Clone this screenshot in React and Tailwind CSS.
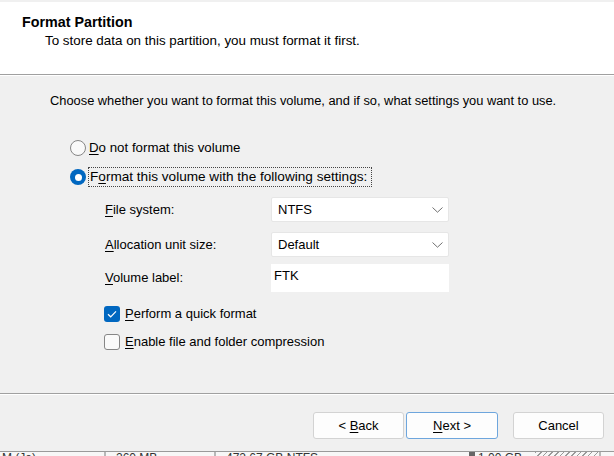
import React from 'react';

const font = { fontFamily: '"Liberation Sans", Arial, sans-serif' };

const Chevron = () => (
  <svg width="11" height="6" viewBox="0 0 11 6" className="text-[#707070]">
    <path d="M0.5 0.5 L5.5 5.2 L10.5 0.5" fill="none" stroke="currentColor" strokeWidth="1" />
  </svg>
);

const Radio = ({ checked }) =>
  checked ? (
    <span className="flex h-4 w-4 items-center justify-center rounded-full bg-[#0067c0]">
      <span className="h-[7px] w-[7px] rounded-full bg-white" />
    </span>
  ) : (
    <span className="h-4 w-4 rounded-full border border-[#868686] bg-[#f9f9f9]" />
  );

const Checkbox = ({ checked }) =>
  checked ? (
    <span className="flex h-4 w-4 items-center justify-center rounded-[3px] bg-[#0067c0]">
      <svg width="10" height="8" viewBox="0 0 10 8">
        <path d="M1 4.2 L3.7 6.8 L9 1.3" fill="none" stroke="white" strokeWidth="1.2" />
      </svg>
    </span>
  ) : (
    <span className="h-4 w-4 rounded-[3px] border border-[#868686] bg-[#fafafa]" />
  );

const Field = ({ label, children }) => (
  <div className="flex items-center">
    <span className="w-[166px]">{label}</span>
    {children}
  </div>
);

const Select = ({ value }) => (
  <div className="flex h-[25px] w-[178px] items-center justify-between rounded-[2px] border border-[#e6e6e6] bg-white pl-[6px] pr-[5px]">
    <span>{value}</span>
    <Chevron />
  </div>
);

const Button = ({ children, primary, w = 'w-[92px]' }) => (
  <button
    className={`h-[27px] ${w} rounded-[3px] border bg-[#fdfdfd] text-[13px] text-black ${
      primary ? 'border-[#6ea6dd]' : 'border-[#d3d3d3]'
    }`}
  >
    {children}
  </button>
);

export default function App() {
  return (
    <div style={font} className="flex h-[456px] w-[614px] flex-col overflow-hidden bg-[#f0f0f0] text-[13px] leading-[16px] text-black">
      <div className="h-[2px] bg-[#f0f0f0]" />
      <div className="h-[72px] bg-white pl-[22px] pt-[12px]">
        <div className="text-[14.3px] font-bold leading-[17px]">Format Partition</div>
        <div className="mt-[2px] pl-[23px] text-[13.4px]">To store data on this partition, you must format it first.</div>
      </div>
      <div className="border-t border-b border-t-[#a0a0a0] border-b-white" />

      <div className="flex-1 pl-[50px] pt-[17px]">
        <div className="text-[12.85px]">Choose whether you want to format this volume, and if so, what settings you want to use.</div>

        <div className="ml-[20px] mt-[29px] flex h-[20px] items-center gap-[3px] text-[13.3px]">
          <Radio />
          <span><u className="underline-offset-2">D</u>o not format this volume</span>
        </div>
        <div className="ml-[20px] mt-[9px] flex h-[20px] items-center gap-[2px] text-[13.6px]">
          <Radio checked />
          <span className="flex h-[20px] items-center border border-dotted border-[#444] pl-[1px] pr-[4px]">
            F<u className="underline-offset-2">o</u>rmat this volume with the following settings:
          </span>
        </div>

        <div className="ml-[55px] mt-[10px] flex flex-col">
          <Field label={<><u className="underline-offset-2">F</u>ile system:</>}>
            <Select value="NTFS" />
          </Field>
          <div className="mt-[10px]">
            <Field label={<><u className="underline-offset-2">A</u>llocation unit size:</>}>
              <Select value="Default" />
            </Field>
          </div>
          <div className="mt-[7px]">
            <Field label={<><u className="underline-offset-2">V</u>olume label:</>}>
              <div className="h-[28px] w-[178px] bg-white pl-[3px] pt-[4px]">FTK</div>
            </Field>
          </div>
          <div className="-ml-[1px] mt-[14px] flex h-4 items-center gap-[5px]">
            <Checkbox checked />
            <span><u className="underline-offset-2">P</u>erform a quick format</span>
          </div>
          <div className="-ml-[1px] mt-[12px] flex h-4 items-center gap-[5px]">
            <Checkbox />
            <span><u className="underline-offset-2">E</u>nable file and folder compression</span>
          </div>
        </div>
      </div>

      <div className="border-t border-b border-t-[#a0a0a0] border-b-white" />
      <div className="flex h-[56px] items-start pl-[313px] pt-[17px]">
        <Button w="w-[91px]">&lt; <u className="underline-offset-2">B</u>ack</Button>
        <div className="ml-[2px]">
          <Button primary><u className="underline-offset-2">N</u>ext &gt;</Button>
        </div>
        <div className="ml-[15px]">
          <Button w="w-[91px]">Cancel</Button>
        </div>
      </div>

      <div className="flex h-[5px] overflow-hidden border-t border-[#9a9a9a] bg-[#f7f7f7] text-[12px] leading-[12px] text-[#333]">
        <div className="w-[104px] pl-[2px]">M (Je)</div>
        <div className="w-[2px] bg-[#b8b8b8]" />
        <div className="w-[108px] pl-[10px]">260 MB</div>
        <div className="w-[2px] bg-[#b8b8b8]" />
        <div className="w-[253px] pl-[10px]">472.67 GB NTFS</div>
        <div className="w-[6px] bg-[#666]" />
        <div className="w-[60px] pl-[3px]">1.00 GB</div>
        <div className="w-[64px] bg-[repeating-linear-gradient(135deg,#9a9a9a_0,#9a9a9a_1px,transparent_1px,transparent_4px)]" />
        <div className="w-[2px] bg-[#b8b8b8]" />
      </div>
    </div>
  );
}
